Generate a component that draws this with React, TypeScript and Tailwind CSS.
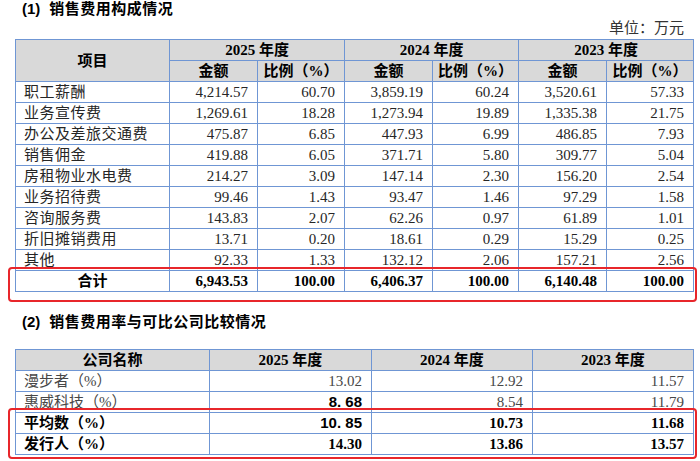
import React from 'react';

const serif = { fontFamily: '"Liberation Serif", "Noto Sans CJK SC", serif' };
const sans = { fontFamily: '"Liberation Sans", "Noto Sans CJK SC", sans-serif' };

interface Row {
    name: string;
    values: string[];
}

const costRows: Row[] = [
    { name: '职工薪酬', values: ['4,214.57', '60.70', '3,859.19', '60.24', '3,520.61', '57.33'] },
    { name: '业务宣传费', values: ['1,269.61', '18.28', '1,273.94', '19.89', '1,335.38', '21.75'] },
    { name: '办公及差旅交通费', values: ['475.87', '6.85', '447.93', '6.99', '486.85', '7.93'] },
    { name: '销售佣金', values: ['419.88', '6.05', '371.71', '5.80', '309.77', '5.04'] },
    { name: '房租物业水电费', values: ['214.27', '3.09', '147.14', '2.30', '156.20', '2.54'] },
    { name: '业务招待费', values: ['99.46', '1.43', '93.47', '1.46', '97.29', '1.58'] },
    { name: '咨询服务费', values: ['143.83', '2.07', '62.26', '0.97', '61.89', '1.01'] },
    { name: '折旧摊销费用', values: ['13.71', '0.20', '18.61', '0.29', '15.29', '0.25'] },
    { name: '其他', values: ['92.33', '1.33', '132.12', '2.06', '157.21', '2.56'] },
];

const totals = ['6,943.53', '100.00', '6,406.37', '100.00', '6,140.48', '100.00'];

const cell = 'border border-[#6f96d4] h-[21px] p-0 leading-[20px]';
const head = `${cell} bg-[#d9d9d9] text-center font-bold text-black`;
const num = `${cell} text-right pr-[9px]`;

const App: React.FC = () => {
    return (
        <div className="w-[700px] h-[461px] bg-white overflow-hidden text-[#262626]" style={serif}>
            {/* (1) */}
            <div className="h-[18px] pl-[22px] flex items-center text-[15px] font-semibold text-black" style={sans}>
                <span>(1)</span>
                <span className="ml-[9px] tracking-[0.5px]">销售费用构成情况</span>
            </div>
            <div className="h-[21px] pr-[16px] text-right text-[15px] leading-[21px] text-[#333]">单位：万元</div>

            <div className="relative">
                <table className="ml-[15px] w-[678px] table-fixed border-collapse text-[15px]">
                    <colgroup>
                        <col className="w-[154px]" />
                        <col className="w-[88px]" />
                        <col className="w-[87px]" />
                        <col className="w-[88px]" />
                        <col className="w-[86px]" />
                        <col className="w-[88px]" />
                        <col className="w-[87px]" />
                    </colgroup>
                    <thead>
                        <tr>
                            <th rowSpan={2} className={head}>项目</th>
                            <th colSpan={2} className={head}>2025 年度</th>
                            <th colSpan={2} className={head}>2024 年度</th>
                            <th colSpan={2} className={head}>2023 年度</th>
                        </tr>
                        <tr>
                            {[0, 1, 2].map((i) => (
                                <React.Fragment key={i}>
                                    <th className={head}>金额</th>
                                    <th className={head}>比例（%）</th>
                                </React.Fragment>
                            ))}
                        </tr>
                    </thead>
                    <tbody>
                        {costRows.map((row) => (
                            <tr key={row.name}>
                                <td className={`${cell} pl-[8px] tracking-[0.5px]`}>{row.name}</td>
                                {row.values.map((v, i) => (
                                    <td key={i} className={num}>{v}</td>
                                ))}
                            </tr>
                        ))}
                        <tr>
                            <td className={`${cell} text-center font-bold text-black`}>合计</td>
                            {totals.map((v, i) => (
                                <td key={i} className={`${num} font-bold text-black`}>{v}</td>
                            ))}
                        </tr>
                    </tbody>
                </table>
                {/* highlight round the total row */}
                <div className="absolute left-[8px] top-[228px] w-[689px] h-[35px] border-2 border-[#e8262b] rounded-[4px]" />
            </div>

            {/* (2) */}
            <div className="mt-[20px] h-[20px] pl-[22px] flex items-center text-[15px] font-semibold text-black" style={sans}>
                <span>(2)</span>
                <span className="ml-[9px] tracking-[0.5px]">销售费用率与可比公司比较情况</span>
            </div>

            <div className="relative mt-[17px]">
                <table className="ml-[15px] w-[678px] table-fixed border-collapse text-[15px]">
                    <colgroup>
                        <col className="w-[194px]" />
                        <col className="w-[162px]" />
                        <col className="w-[161px]" />
                        <col className="w-[161px]" />
                    </colgroup>
                    <thead>
                        <tr>
                            <th className={head}>公司名称</th>
                            <th className={head}>2025 年度</th>
                            <th className={head}>2024 年度</th>
                            <th className={head}>2023 年度</th>
                        </tr>
                    </thead>
                    <tbody>
                        <tr className="text-[#474747]">
                            <td className={`${cell} pl-[8px]`}>漫步者（%）</td>
                            <td className={num}>13.02</td>
                            <td className={num}>12.92</td>
                            <td className={num}>11.57</td>
                        </tr>
                        <tr className="text-[#474747]">
                            <td className={`${cell} pl-[8px]`}>惠威科技（%）</td>
                            <td className={`${num} font-bold text-black`} style={sans}>8. 68</td>
                            <td className={num}>8.54</td>
                            <td className={num}>11.79</td>
                        </tr>
                        <tr className="font-bold text-black">
                            <td className={`${cell} pl-[8px]`}>平均数（%）</td>
                            <td className={num} style={sans}>10. 85</td>
                            <td className={num}>10.73</td>
                            <td className={num}>11.68</td>
                        </tr>
                        <tr className="font-bold text-black">
                            <td className={`${cell} pl-[8px]`}>发行人（%）</td>
                            <td className={num}>14.30</td>
                            <td className={num}>13.86</td>
                            <td className={num}>13.57</td>
                        </tr>
                    </tbody>
                </table>
                <div className="absolute left-[8px] top-[59px] w-[689px] h-[51px] border-2 border-[#e8262b] rounded-[4px]" />
            </div>
        </div>
    );
};

export default App;
